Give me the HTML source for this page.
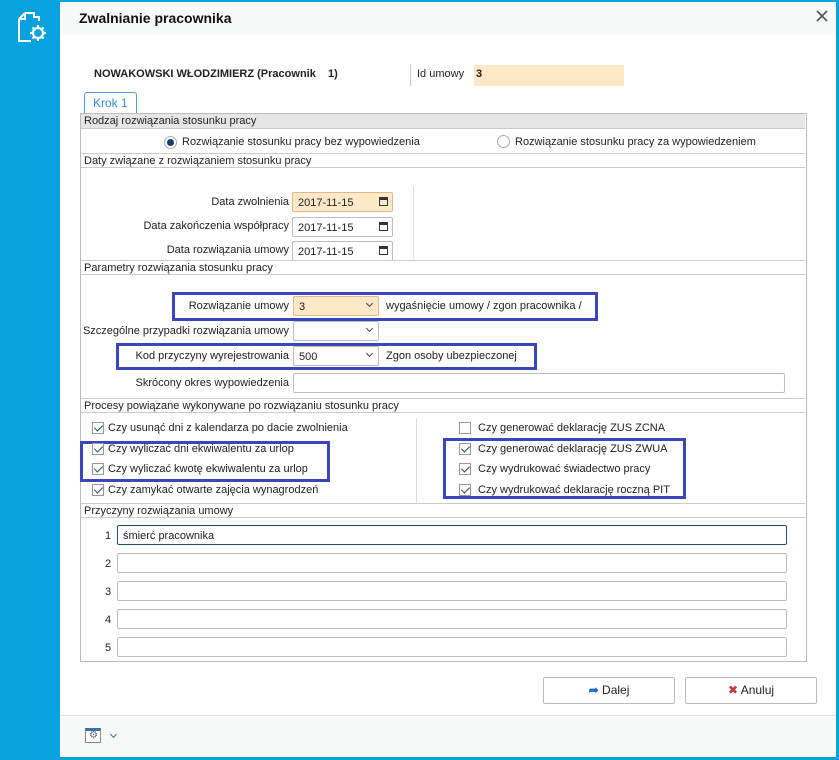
<!DOCTYPE html>
<html><head><meta charset="utf-8"><style>
*{box-sizing:border-box;margin:0;padding:0}
body{width:839px;height:760px;position:relative;background:#fff;font-family:"Liberation Sans",Arial,sans-serif;font-size:11px;color:#222;overflow:hidden}
.a{position:absolute}
.t{position:absolute;white-space:nowrap;line-height:16px}
.r{text-align:right}
.in{position:absolute;border:1px solid #bdbdbd;border-radius:2px;background:#fff;height:20px;padding:3px 5px 1px;line-height:14px}
.or{background:#fde8c8;border-color:#e4b98a}
.hd{position:absolute;left:81px;width:724px;height:15px;border-top:1px solid #ccc;border-bottom:1px solid #ccc;padding-left:3px;line-height:14px;background:#fff}
.bx{position:absolute;border:3px solid #3c44c0}
.cb{position:absolute;width:12px;height:12px;border:1px solid #999;background:#fff}
.cb.c::after{content:"";position:absolute;left:3px;top:0px;width:4px;height:7px;border:solid #1a4f8c;border-width:0 1.5px 1.5px 0;transform:rotate(45deg)}
.cal{position:absolute;right:4px;top:4px;width:9px;height:9px;border:1.5px solid #333;border-top-width:3px}
.chev{position:absolute;right:6px;top:4px;width:5px;height:5px;border:solid #444;border-width:0 1.3px 1.3px 0;transform:rotate(45deg)}
.btn{position:absolute;height:27px;width:132px;border:1px solid #bbb;border-radius:2px;background:#fff;text-align:center;line-height:25px;font-size:12px}
</style></head><body>
<div class="a" style="left:0;top:0;width:60px;height:760px;background:#08a3df"></div>
<div class="a" style="left:60px;top:0;width:779px;height:2px;background:#08a3df"></div>
<div class="a" style="left:836px;top:0;width:3px;height:760px;background:#08a3df"></div>
<div class="a" style="left:60px;top:757px;width:779px;height:3px;background:#08a3df"></div>
<svg class="a" style="left:17px;top:11px" width="30" height="32" viewBox="0 0 30 32"><path d="M8 2H17V6H22V10M8 2L2 8V30H14M2 8H8V2" fill="none" stroke="#fff" stroke-width="2"/><circle cx="21" cy="22" r="5" fill="none" stroke="#fff" stroke-width="2.2"/><g stroke="#fff" stroke-width="2.2"><path d="M21 14v3M21 27v3M13 22h3M26 22h3M15.5 16.5l2 2M24.5 25.5l2 2M15.5 27.5l2-2M24.5 18.5l2-2"/></g></svg>
<div class="a" style="left:60px;top:2px;width:776px;height:33px;background:#f8f9f9"></div>
<div class="t" style="left:79px;top:10px;font-size:14px;font-weight:bold;color:#111">Zwalnianie pracownika</div>
<svg class="a" style="left:816px;top:10px" width="12" height="12"><path d="M1 1L11 11M11 1L1 11" stroke="#555" stroke-width="1.6"/></svg>
<div class="t" style="left:94px;top:66px;font-weight:bold;font-size:11px">NOWAKOWSKI WŁODZIMIERZ (Pracownik &nbsp;&nbsp;&nbsp;1)</div>
<div class="a" style="left:410px;top:64px;width:1px;height:22px;background:#ccc"></div>
<div class="t" style="left:417px;top:66px;font-size:11px">Id umowy</div>
<div class="a" style="left:474px;top:65px;width:150px;height:21px;background:#fde8c8"></div>
<div class="t" style="left:476px;top:66px;font-size:11px;font-weight:bold">3</div>
<div class="a" style="left:84px;top:92px;width:53px;height:22px;border:1px solid #4a9fd6;border-bottom:none;border-radius:3px 3px 0 0;background:#fff"></div>
<div class="t" style="left:93px;top:95px;color:#2f8fd0;font-size:12px">Krok 1</div>
<div class="a" style="left:80px;top:113px;width:727px;height:549px;border:1px solid #bbb"></div>
<div class="hd" style="top:114px;background:#e6e6e6;border-top:none">Rodzaj rozwiązania stosunku pracy</div>
<div class="a" style="left:164px;top:136px;width:13px;height:13px;border-radius:50%;border:1px solid #aaa;background:#fff"><div class="a" style="left:2px;top:2px;width:7px;height:7px;border-radius:50%;background:#143b7a"></div></div>
<div class="t" style="left:182px;top:134px">Rozwiązanie stosunku pracy bez wypowiedzenia</div>
<div class="a" style="left:497px;top:135px;width:13px;height:13px;border-radius:50%;border:1px solid #aaa"></div>
<div class="t" style="left:515px;top:134px">Rozwiązanie stosunku pracy za wypowiedzeniem</div>
<div class="hd" style="top:153px">Daty związane z rozwiązaniem stosunku pracy</div>
<div class="t r" style="right:550px;top:194px">Data zwolnienia</div>
<div class="t r" style="right:550px;top:218px">Data zakończenia współpracy</div>
<div class="t r" style="right:550px;top:242px">Data rozwiązania umowy</div>
<div class="in or" style="left:292px;top:192px;width:101px">2017-11-15<div class="cal"></div></div>
<div class="in" style="left:292px;top:217px;width:101px">2017-11-15<div class="cal"></div></div>
<div class="in" style="left:292px;top:241px;width:101px">2017-11-15<div class="cal"></div></div>
<div class="a" style="left:413px;top:186px;width:1px;height:73px;background:#ddd"></div>
<div class="hd" style="top:260px">Parametry rozwiązania stosunku pracy</div>
<div class="bx" style="left:172px;top:292px;width:426px;height:29px"></div>
<div class="t r" style="right:550px;top:298px">Rozwiązanie umowy</div>
<div class="in or" style="left:293px;top:296px;width:86px">3<div class="chev"></div></div>
<div class="t" style="left:386px;top:298px">wygaśnięcie umowy / zgon pracownika /</div>
<div class="t r" style="right:550px;top:323px">Szczególne przypadki rozwiązania umowy</div>
<div class="in" style="left:293px;top:321px;width:86px"><div class="chev"></div></div>
<div class="bx" style="left:116px;top:343px;width:421px;height:27px"></div>
<div class="t r" style="right:550px;top:348px">Kod przyczyny wyrejestrowania</div>
<div class="in" style="left:293px;top:346px;width:86px">500<div class="chev"></div></div>
<div class="t" style="left:386px;top:348px">Zgon osoby ubezpieczonej</div>
<div class="t r" style="right:550px;top:375px">Skrócony okres wypowiedzenia</div>
<div class="in" style="left:293px;top:373px;width:492px"></div>
<div class="hd" style="top:398px">Procesy powiązane wykonywane po rozwiązaniu stosunku pracy</div>
<div class="a" style="left:416px;top:418px;width:1px;height:85px;background:#ddd"></div>
<div class="bx" style="left:80px;top:441px;width:250px;height:41px"></div>
<div class="bx" style="left:443px;top:438px;width:243px;height:61px"></div>
<div class="cb c" style="left:92px;top:422px"></div><div class="t" style="left:108px;top:420px">Czy usunąć dni z kalendarza po dacie zwolnienia</div>
<div class="cb c" style="left:92px;top:443px"></div><div class="t" style="left:108px;top:441px">Czy wyliczać dni ekwiwalentu za urlop</div>
<div class="cb c" style="left:92px;top:463px"></div><div class="t" style="left:108px;top:461px">Czy wyliczać kwotę ekwiwalentu za urlop</div>
<div class="cb c" style="left:92px;top:484px"></div><div class="t" style="left:108px;top:482px">Czy zamykać otwarte zajęcia wynagrodzeń</div>
<div class="cb" style="left:459px;top:422px"></div><div class="t" style="left:478px;top:420px">Czy generować deklarację ZUS ZCNA</div>
<div class="cb c" style="left:459px;top:443px"></div><div class="t" style="left:478px;top:441px">Czy generować deklarację ZUS ZWUA</div>
<div class="cb c" style="left:459px;top:463px"></div><div class="t" style="left:478px;top:461px">Czy wydrukować świadectwo pracy</div>
<div class="cb c" style="left:459px;top:484px"></div><div class="t" style="left:478px;top:482px">Czy wydrukować deklarację roczną PIT</div>
<div class="hd" style="top:503px">Przyczyny rozwiązania umowy</div>
<div class="t" style="left:105px;top:528px">1</div><div class="in" style="left:117px;top:525px;width:670px;border-color:#1f4f6f">śmierć pracownika</div>
<div class="t" style="left:105px;top:556px">2</div><div class="in" style="left:117px;top:553px;width:670px"></div>
<div class="t" style="left:105px;top:584px">3</div><div class="in" style="left:117px;top:581px;width:670px"></div>
<div class="t" style="left:105px;top:612px">4</div><div class="in" style="left:117px;top:609px;width:670px"></div>
<div class="t" style="left:105px;top:640px">5</div><div class="in" style="left:117px;top:637px;width:670px"></div>
<div class="btn" style="left:543px;top:677px"><span style="color:#1b6fd0;font-weight:bold">➦</span> Dalej</div>
<div class="btn" style="left:685px;top:677px"><span style="color:#c33">✖</span> Anuluj</div>
<div class="a" style="left:60px;top:715px;width:776px;height:42px;background:#f7f8f8;border-top:1px solid #e2e2e2"></div>
<div class="a" style="left:85px;top:728px;width:16px;height:15px;border:1px solid #888;border-top:3px solid #3a6fb0;background:#fff"></div>
<div class="t" style="left:89px;top:728px;font-size:10px;color:#666">⚙</div>
<div class="a" style="left:111px;top:732px;width:5px;height:5px;border:solid #3a6fb0;border-width:0 1.3px 1.3px 0;transform:rotate(45deg)"></div>
</body></html>
